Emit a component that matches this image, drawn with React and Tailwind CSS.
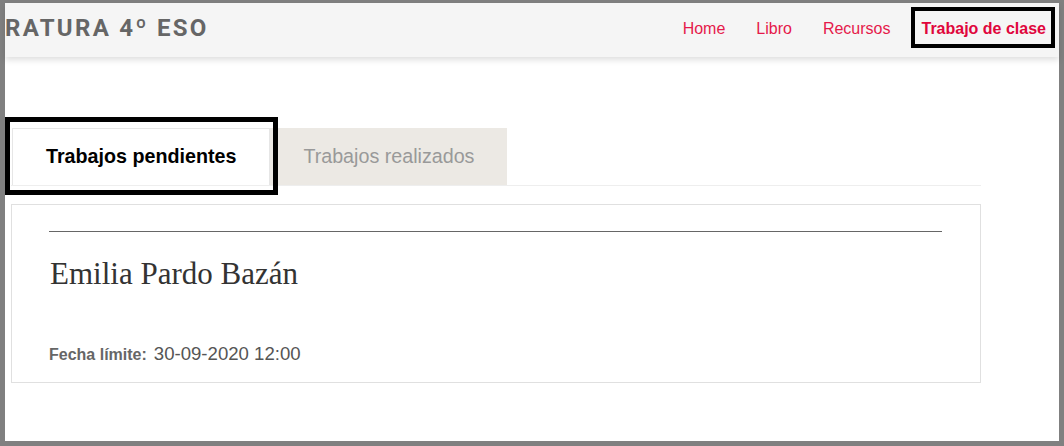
import React from "react";

export default function App() {
  const links = ["Home", "Libro", "Recursos"];
  return (
    <div className="w-[1064px] h-[446px] bg-[#808080] pt-[3px] pl-[5px] pr-[5px] pb-[5px] overflow-hidden">
      <div className="w-full h-full bg-white flex flex-col" style={{ fontFamily: '"Liberation Sans", Arial, sans-serif' }}>
        <header className="relative z-10 h-[54px] shrink-0 bg-[#f5f5f5] shadow-[0_3px_6px_rgba(0,0,0,0.13)] flex items-center justify-between pb-[4px] pr-[13px]">
          <div
            className="text-[24px] font-bold tracking-[2.3px] text-[#666] leading-none"
            style={{ fontFamily: 'Roboto, "DejaVu Sans", sans-serif' }}
          >
            RATURA 4º ESO
          </div>
          <nav className="flex items-center gap-[31px] text-[16px] leading-[20px] pt-[2px]">
            {links.map((l) => (
              <span key={l} className="text-[#e5194a]">{l}</span>
            ))}
            <span className="relative font-bold text-[#e0063c]">
              Trabajo de clase
              <span className="absolute -left-[10px] -right-[9px] -top-[12px] -bottom-[9px] border-4 border-black"></span>
            </span>
          </nav>
        </header>

        <main className="ml-[6px] w-[970px] mt-[71px]">
          <div className="flex border-b border-[#eeeeee]">
            <div className="relative ml-[1px] h-[57px] px-[33px] flex items-center bg-white border border-b-0 border-[#e6e6e6] text-[19.7px] font-bold text-black">
              Trabajos pendientes
              <span className="absolute z-10 -left-[8px] -right-[9px] -top-[12px] -bottom-[10px] border-[5px] border-black"></span>
            </div>
            <div className="h-[57px] px-[33px] flex items-center bg-[#ece9e4] text-[19.7px] text-[#999]">
              Trabajos realizados
            </div>
          </div>

          <section className="mt-[18px] border border-[#e0e0e0] pt-[26px] pb-[17px] pl-[37px] pr-[38px]">
            <div className="h-px bg-[#666]"></div>
            <h2
              className="mt-[23px] text-[31px] leading-[37px] text-[#333] pl-px"
              style={{ fontFamily: '"Liberation Serif", "Times New Roman", serif' }}
            >
              Emilia Pardo Bazán
            </h2>
            <div className="mt-[51px] flex items-baseline gap-[7px] leading-[21px]">
              <span className="text-[16px] font-bold text-[#666]">Fecha límite:</span>
              <span className="text-[18.6px] text-[#555]">30-09-2020 12:00</span>
            </div>
          </section>
        </main>
      </div>
    </div>
  );
}
